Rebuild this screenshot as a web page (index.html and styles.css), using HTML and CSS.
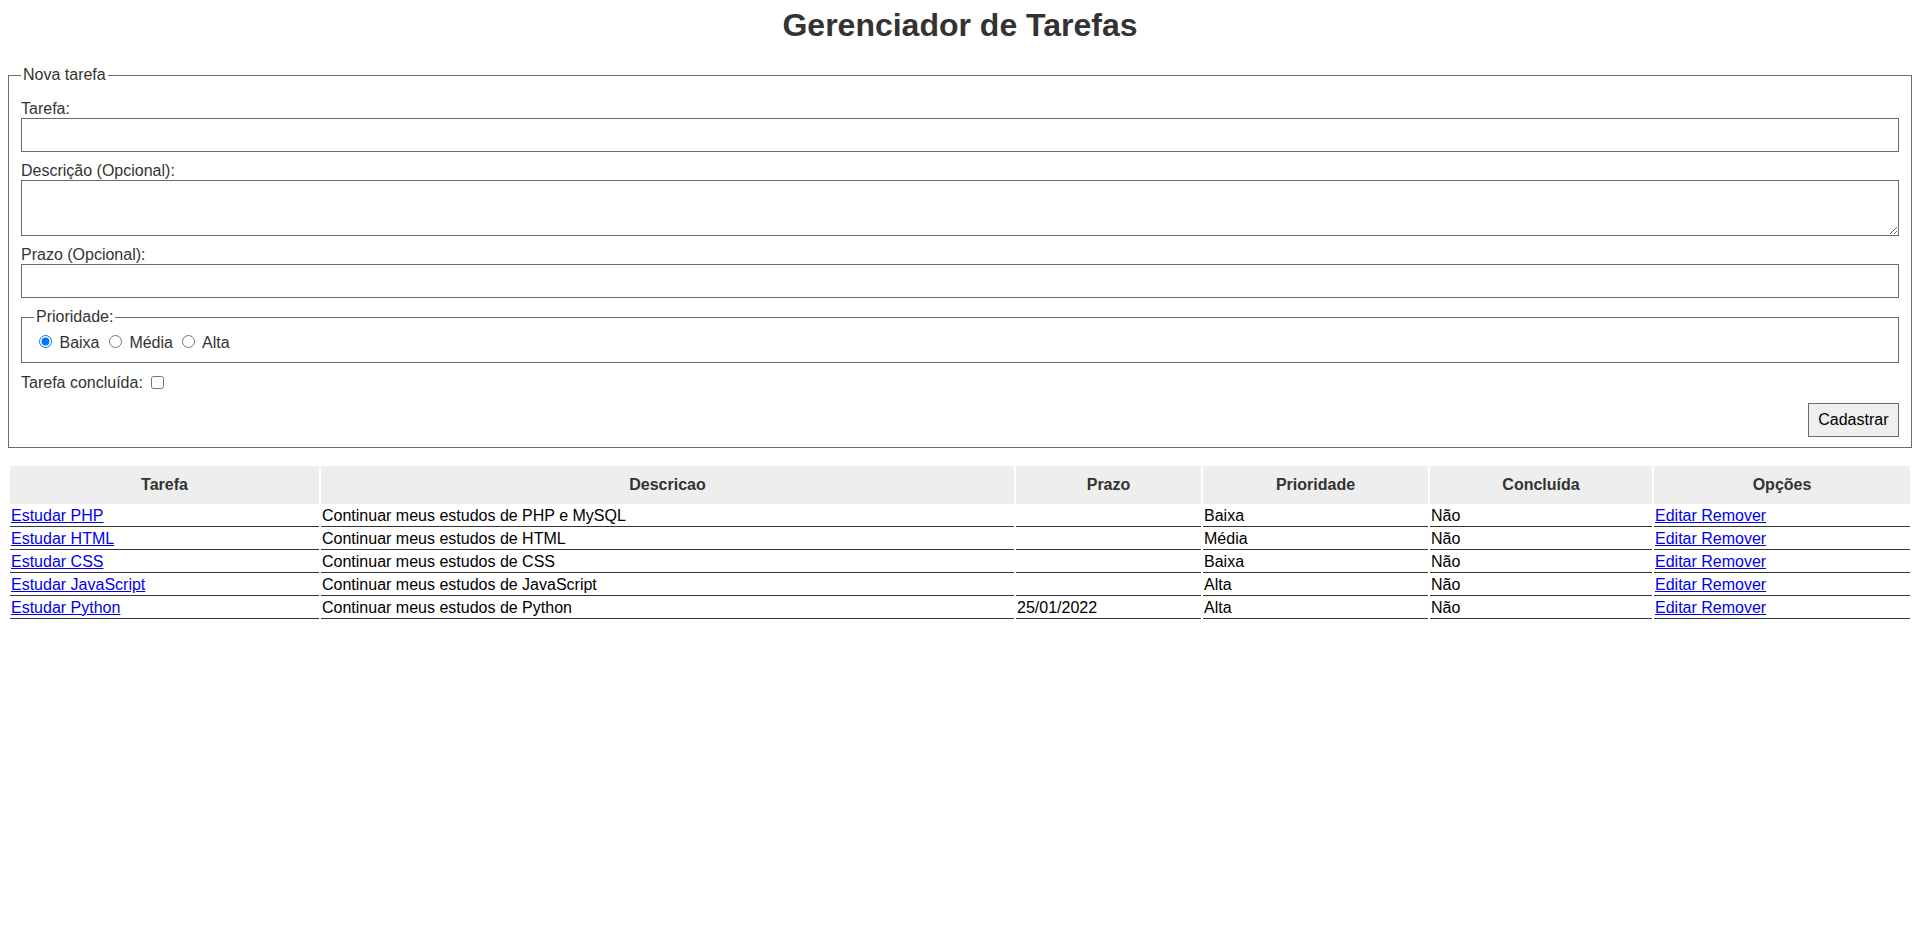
FILE: index.html
```html
<!DOCTYPE html>
<html lang="pt-BR">
<head>
<meta charset="utf-8">
<title>Gerenciador de Tarefas</title>
<link rel="stylesheet" href="styles.css">
</head>
<body>
<h1 class="title">Gerenciador de Tarefas</h1>
<form class="task-form">
  <fieldset class="box">
    <legend class="box-legend">Nova tarefa</legend>
    <div class="group first">
      <label class="lbl" for="nome">Tarefa:</label>
      <input class="field" id="nome" type="text">
    </div>
    <div class="group">
      <label class="lbl" for="descricao">Descrição (Opcional):</label>
      <textarea class="field area" id="descricao"></textarea>
    </div>
    <div class="group">
      <label class="lbl" for="prazo">Prazo (Opcional):</label>
      <input class="field" id="prazo" type="text">
    </div>
    <fieldset class="prio">
      <legend class="box-legend">Prioridade:</legend>
      <input class="radio" type="radio" name="prioridade" id="baixa" checked> <label for="baixa">Baixa</label>
      <input class="radio" type="radio" name="prioridade" id="media"> <label for="media">Média</label>
      <input class="radio" type="radio" name="prioridade" id="alta"> <label for="alta">Alta</label>
    </fieldset>
    <div class="check-row">
      <label for="concluida">Tarefa concluída:</label> <input class="chk" type="checkbox" id="concluida">
    </div>
    <div class="actions">
      <button class="btn" type="button">Cadastrar</button>
    </div>
  </fieldset>
</form>
<table class="tasks">
  <thead>
    <tr>
      <th class="c1">Tarefa</th>
      <th class="c2">Descricao</th>
      <th class="c3">Prazo</th>
      <th class="c4">Prioridade</th>
      <th class="c5">Concluída</th>
      <th class="c6">Opções</th>
    </tr>
  </thead>
  <tbody>
    <tr>
      <td><a href="#">Estudar PHP</a></td>
      <td>Continuar meus estudos de PHP e MySQL</td>
      <td></td>
      <td>Baixa</td>
      <td>Não</td>
      <td><a href="#">Editar </a><a href="#">Remover</a></td>
    </tr>
    <tr>
      <td><a href="#">Estudar HTML</a></td>
      <td>Continuar meus estudos de HTML</td>
      <td></td>
      <td>Média</td>
      <td>Não</td>
      <td><a href="#">Editar </a><a href="#">Remover</a></td>
    </tr>
    <tr>
      <td><a href="#">Estudar CSS</a></td>
      <td>Continuar meus estudos de CSS</td>
      <td></td>
      <td>Baixa</td>
      <td>Não</td>
      <td><a href="#">Editar </a><a href="#">Remover</a></td>
    </tr>
    <tr>
      <td><a href="#">Estudar JavaScript</a></td>
      <td>Continuar meus estudos de JavaScript</td>
      <td></td>
      <td>Alta</td>
      <td>Não</td>
      <td><a href="#">Editar </a><a href="#">Remover</a></td>
    </tr>
    <tr>
      <td><a href="#">Estudar Python</a></td>
      <td>Continuar meus estudos de Python</td>
      <td>25/01/2022</td>
      <td>Alta</td>
      <td>Não</td>
      <td><a href="#">Editar </a><a href="#">Remover</a></td>
    </tr>
  </tbody>
</table>
</body>
</html>
```

FILE: styles.css
```css
body {
  margin: 8px;
  font-family: "Liberation Sans", Arial, sans-serif;
  font-size: 16px;
  color: #333;
  background: #fff;
}

.title {
  margin: 0 0 24px;
  font-size: 32px;
  line-height: 34px;
  font-weight: bold;
  text-align: center;
  color: #333;
}

.task-form {
  margin: 0;
}

.box {
  margin: 0;
  padding: 6px 12px 10px;
  border: 1px solid #6b6b6b;
}

.box-legend {
  padding: 0 2px;
  line-height: 18px;
  color: #333;
}

.group {
  margin-top: 9px;
}

.lbl {
  display: block;
  line-height: 19px;
}

.field {
  display: block;
  box-sizing: border-box;
  width: 100%;
  height: 34px;
  margin: 0;
  padding: 1px 2px;
  border: 1px solid #6b6b6b;
  font-family: "Liberation Sans", Arial, sans-serif;
  font-size: 13px;
  background: #fff;
}

.area {
  height: 56px;
}

.prio {
  margin: 10px 0 0;
  padding: 5.6px 12px 10px;
  border: 1px solid #6b6b6b;
}

.radio {
  margin: 3px 3px 0 5px;
}

.check-row {
  margin-top: 10px;
  line-height: 19px;
}

.chk {
  margin: 0 0 0 4px;
  vertical-align: -1px;
}

.actions {
  display: flex;
  justify-content: flex-end;
  margin-top: 11px;
}

.btn {
  box-sizing: border-box;
  height: 34px;
  margin: 0;
  padding: 0 9.5px;
  font-family: "Liberation Sans", Arial, sans-serif;
  font-size: 16px;
  color: #000;
  background: #efefef;
  border: 1px solid #6b6b6b;
}

.tasks {
  width: 100%;
  margin-top: 16px;
  border-spacing: 2px;
  table-layout: fixed;
  font-size: 16px;
}

.tasks th {
  box-sizing: border-box;
  padding: 10px 1px;
  line-height: 18px;
  background: #eee;
  color: #333;
  font-weight: bold;
  text-align: center;
}

.tasks td {
  padding: 1px;
  line-height: 18px;
  border-bottom: 1px solid #333;
  color: #000;
  text-align: left;
}

.tasks a {
  color: #0000ee;
  text-decoration: underline;
}

.c1 { width: 309px; }
.c2 { width: 693px; }
.c3 { width: 185px; }
.c4 { width: 225px; }
.c5 { width: 222px; }
.c6 { width: 256px; }
```
